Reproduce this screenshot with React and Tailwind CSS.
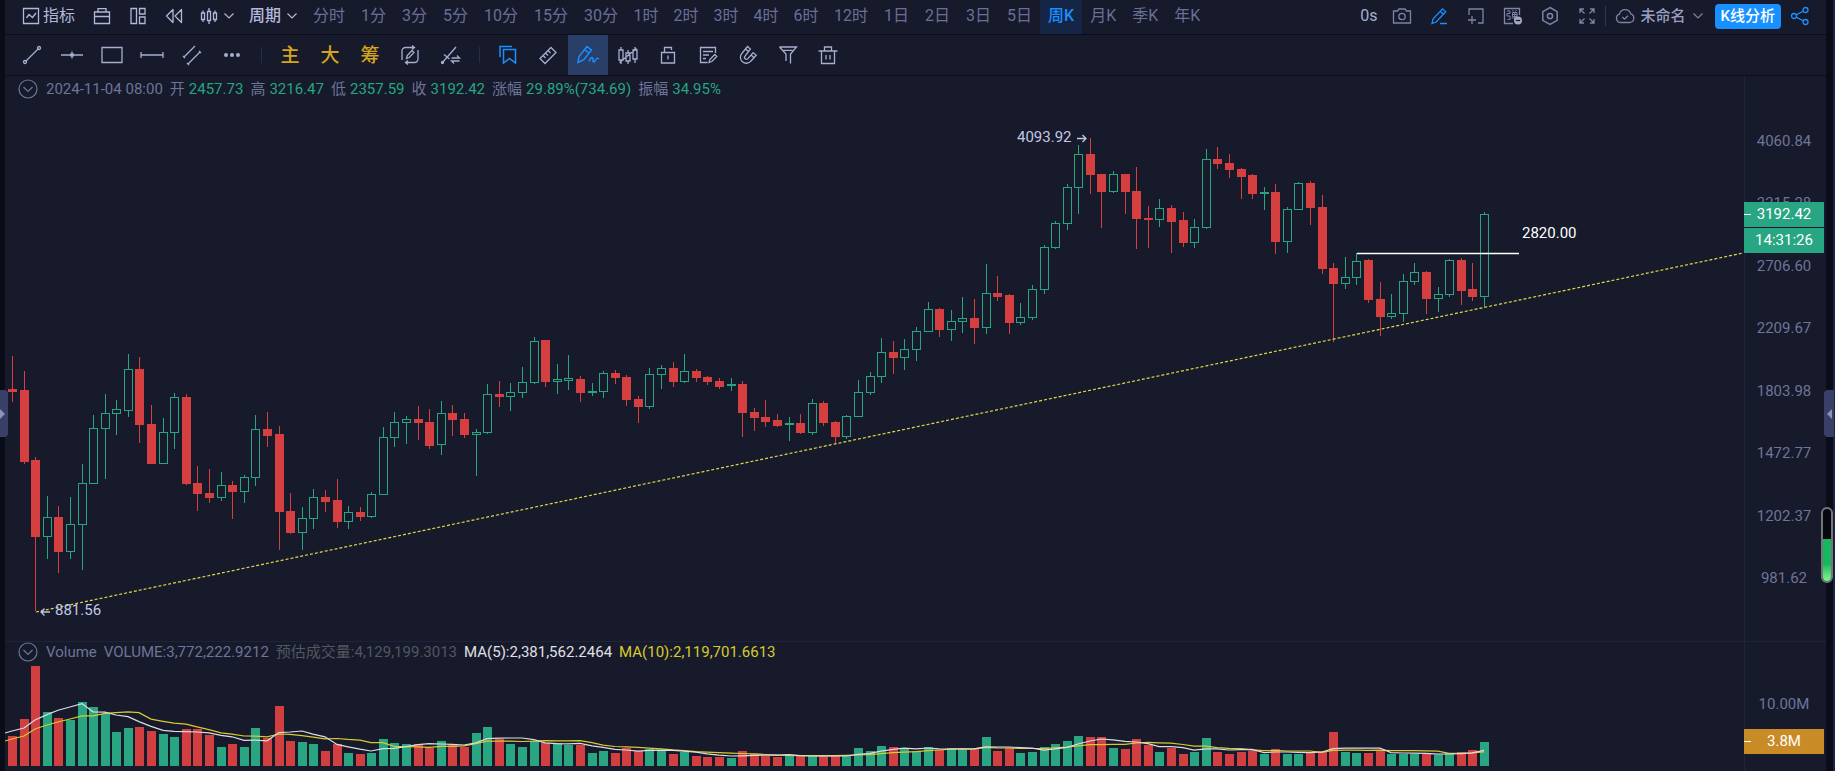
import { clsx } from "clsx";

const UP = "#26a581";
const DOWN = "#d63f40";

// Each candle: [direction, wick top, body top, body bottom, wick bottom, volume]
const CANDLES = [
    ["d", 356, 389, 392, 402, 30], ["d", 371, 390, 462, 464, 47], ["d", 457, 460, 537, 611, 100],
    ["u", 496, 517, 537, 559, 54], ["d", 506, 517, 552, 573, 48], ["u", 497, 524, 552, 559, 46],
    ["u", 464, 483, 525, 570, 64], ["u", 415, 428, 484, 484, 59], ["u", 394, 413, 429, 479, 52],
    ["u", 400, 409, 414, 435, 34], ["u", 354, 369, 411, 417, 38], ["d", 357, 369, 425, 443, 39],
    ["d", 405, 424, 464, 464, 35], ["u", 418, 432, 464, 464, 32], ["u", 393, 397, 433, 449, 29],
    ["d", 394, 397, 484, 485, 37], ["d", 466, 483, 494, 511, 37], ["d", 469, 493, 498, 503, 31],
    ["u", 472, 485, 498, 501, 19], ["d", 481, 485, 492, 519, 22], ["u", 475, 477, 492, 503, 19],
    ["u", 415, 429, 478, 486, 38], ["d", 412, 429, 436, 447, 28], ["d", 426, 434, 512, 550, 60],
    ["d", 493, 511, 533, 534, 25], ["u", 507, 518, 533, 550, 24], ["u", 489, 497, 519, 529, 22],
    ["d", 490, 497, 502, 512, 15], ["d", 479, 500, 522, 528, 22], ["u", 506, 512, 522, 529, 13],
    ["d", 507, 512, 517, 521, 12], ["u", 492, 494, 517, 518, 13], ["u", 427, 437, 495, 495, 27],
    ["u", 412, 422, 438, 447, 23], ["u", 416, 419, 423, 444, 22], ["d", 406, 419, 423, 440, 22],
    ["d", 409, 422, 446, 449, 18], ["u", 401, 413, 445, 455, 25], ["d", 405, 413, 420, 436, 21],
    ["d", 413, 419, 435, 438, 19], ["u", 429, 432, 435, 476, 33], ["u", 384, 394, 433, 434, 39],
    ["d", 381, 394, 397, 407, 27], ["u", 383, 392, 397, 411, 22], ["u", 367, 382, 393, 398, 19],
    ["u", 337, 341, 383, 384, 25], ["d", 340, 340, 382, 387, 23], ["u", 364, 379, 382, 394, 23],
    ["u", 355, 378, 381, 390, 21], ["d", 376, 379, 393, 402, 21], ["u", 383, 391, 393, 396, 13],
    ["u", 371, 373, 392, 398, 15], ["d", 370, 373, 378, 384, 13], ["d", 375, 377, 400, 406, 18],
    ["d", 396, 399, 407, 423, 15], ["u", 368, 374, 407, 409, 17], ["u", 365, 368, 375, 389, 16],
    ["d", 362, 368, 382, 387, 12], ["u", 354, 371, 382, 383, 14], ["d", 369, 371, 378, 382, 10],
    ["d", 376, 377, 382, 385, 9], ["d", 378, 381, 387, 389, 9], ["u", 378, 384, 386, 391, 8],
    ["d", 381, 384, 413, 437, 15], ["d", 408, 412, 418, 431, 12], ["d", 400, 417, 422, 427, 10],
    ["d", 414, 420, 426, 427, 9], ["u", 417, 423, 425, 441, 11], ["d", 414, 423, 433, 434, 10],
    ["u", 399, 403, 433, 435, 10], ["d", 401, 403, 423, 426, 9], ["d", 421, 422, 437, 444, 10],
    ["u", 415, 416, 437, 439, 11], ["u", 380, 392, 417, 417, 18], ["u", 372, 376, 393, 395, 15],
    ["u", 338, 352, 377, 383, 20], ["d", 341, 352, 358, 374, 19], ["u", 339, 349, 358, 370, 17],
    ["u", 327, 331, 350, 361, 15], ["u", 302, 309, 332, 332, 19], ["d", 308, 309, 330, 337, 16],
    ["u", 310, 321, 330, 341, 18], ["u", 297, 318, 322, 333, 16], ["d", 299, 318, 328, 344, 17],
    ["u", 264, 293, 328, 334, 29], ["d", 276, 293, 297, 301, 15], ["d", 294, 295, 323, 334, 18],
    ["u", 303, 317, 323, 325, 13], ["u", 285, 289, 318, 320, 14], ["u", 245, 247, 290, 294, 19],
    ["u", 221, 223, 248, 249, 22], ["u", 184, 187, 224, 230, 25], ["u", 145, 154, 188, 214, 30],
    ["d", 138, 154, 175, 194, 29], ["d", 174, 174, 192, 228, 29], ["u", 171, 174, 192, 193, 18],
    ["d", 174, 174, 192, 214, 17], ["d", 167, 191, 219, 249, 27], ["d", 206, 218, 220, 248, 21],
    ["u", 199, 208, 220, 227, 14], ["d", 205, 208, 222, 253, 18], ["d", 212, 220, 243, 247, 12],
    ["u", 219, 227, 243, 248, 14], ["u", 149, 159, 228, 229, 28], ["d", 147, 159, 164, 169, 14],
    ["d", 154, 163, 170, 178, 12], ["d", 168, 169, 177, 199, 14], ["d", 174, 175, 194, 199, 15],
    ["u", 187, 192, 194, 210, 12], ["d", 184, 192, 242, 254, 17], ["u", 207, 209, 242, 253, 12],
    ["u", 182, 183, 210, 210, 12], ["d", 181, 183, 208, 225, 14], ["d", 195, 207, 269, 274, 15],
    ["d", 263, 268, 284, 342, 34], ["u", 257, 277, 284, 289, 14], ["u", 253, 261, 278, 285, 13],
    ["d", 259, 260, 300, 303, 13], ["d", 282, 299, 317, 336, 15], ["u", 294, 313, 317, 319, 12],
    ["u", 274, 281, 314, 322, 12], ["u", 263, 272, 282, 285, 12], ["d", 271, 272, 299, 314, 12],
    ["u", 287, 294, 299, 312, 11], ["u", 259, 260, 295, 297, 13], ["d", 258, 260, 291, 305, 14],
    ["d", 263, 289, 297, 301, 16], ["u", 212, 214, 297, 307, 24],
];

// Volumes before the first visible candle, needed by the moving averages
const EARLIER_VOLUMES = [17, 30, 14, 18, 16, 32, 60, 27, 26];
const VOLUME_BASE = 766;

const candleX = (i) => Math.round(12 + i * 11.59);

function averageLine(period) {
    const all = [...EARLIER_VOLUMES, ...CANDLES.map((c) => c[5])];
    const points = CANDLES.map((_, i) => {
        const end = i + EARLIER_VOLUMES.length + 1;
        const sum = all.slice(end - period, end).reduce((a, b) => a + b, 0);
        return [candleX(i), VOLUME_BASE - sum / period];
    });
    return [[5, points[0][1] + 2], ...points].map((p) => p.join(",")).join(" ");
}

const PERIODS = [
    "分时", "1分", "3分", "5分", "10分", "15分", "30分", "1时", "2时", "3时", "4时", "6时",
    "12时", "1日", "2日", "3日", "5日", "周K", "月K", "季K", "年K",
];

const PRICES = ["4060.84", "3315.28", "2706.60", "2209.67", "1803.98", "1472.77", "1202.37", "981.62"];

function Icon({ children, size = 20, className }) {
    return (
        <svg
            width={size}
            height={size}
            viewBox="0 0 20 20"
            fill="none"
            stroke="currentColor"
            strokeWidth="1.3"
            className={clsx("shrink-0", className)}
            aria-hidden="true"
        >
            {children}
        </svg>
    );
}

function Chevron({ className }) {
    return (
        <svg width="10" height="6" viewBox="0 0 10 6" fill="none" stroke="currentColor" strokeWidth="1.2" className={className} aria-hidden="true">
            <path d="M0.5 0.5 5 5 9.5 0.5" />
        </svg>
    );
}

function IconButton({ label, className, children }) {
    return (
        <button type="button" aria-label={label} className={clsx("flex items-center justify-center shrink-0", className)}>
            {children}
        </button>
    );
}

function TopBar() {
    return (
        <header className="flex items-center h-[35px] border-b border-[#0b0e1a] text-base leading-6 whitespace-nowrap">
            <div className="flex items-center pl-4 pb-[2px] text-[#b3b7da]">
                <button type="button" className="flex items-center gap-[2px]">
                    <Icon>
                        <path d="M2.5 2.5h15v15h-15z" />
                        <path d="M5.5 12 8 8.5l3.5 3L15 7" />
                    </Icon>
                    指标
                </button>
                <IconButton label="模板" className="w-9 h-8 ml-[9px]">
                    <Icon>
                        <path d="M2.500 6h15v11.500h-15zM2.500 10.500h15M6 6V2.600h8V6" />
                    </Icon>
                </IconButton>
                <IconButton label="布局" className="w-9 h-8">
                    <Icon>
                        <path d="M3 2.500h5.500v15H3zM11.500 2.500H17V8h-5.500zM11.500 11H17v6.500h-5.500z" />
                    </Icon>
                </IconButton>
                <IconButton label="回放" className="w-9 h-8">
                    <Icon>
                        <path d="M9 3.500v13L2.500 10zM17.500 3.500v13L11 10z" strokeLinejoin="round" />
                    </Icon>
                </IconButton>
                <button type="button" aria-label="图表类型" className="flex items-center gap-[5px] ml-[7px]">
                    <Icon>
                        <path d="M2.500 7h3v6.500h-3zM8.500 5.500h3v9h-3zM14.500 7h3v6.500h-3zM4 4.500V7M4 13.500V16M10 2v3.500M10 14.500V18M16 4.500V7M16 13.500V16" />
                    </Icon>
                    <Chevron />
                </button>
                <button type="button" className="flex items-center gap-[6px] ml-[15px] font-medium">
                    周期
                    <Chevron />
                </button>
            </div>
            <nav className="flex items-center ml-2 text-[#6a6f98]">
                {PERIODS.map((p) => (
                    <button
                        key={p}
                        type="button"
                        className={clsx(
                            "h-[34px] pb-[5px] pt-[3px]",
                            /^\d时$/.test(p) ? "w-10" : "px-2",
                            p === "周K" && "bg-[#152545] text-[#1890ff] font-medium"
                        )}
                    >
                        {p}
                    </button>
                ))}
            </nav>
            <div className="flex items-center ml-auto pr-4 pb-[2px] text-[#7e83a8]">
                <span className="mr-[6px] text-[#a9adcf]">0s</span>
                <IconButton label="截图" className="w-[37px]">
                    <Icon>
                        <path d="M1.500 5h4l1.500-2h6l1.500 2h4v12h-17z" />
                        <circle cx="10" cy="10.500" r="3.200" />
                    </Icon>
                </IconButton>
                <IconButton label="画线" className="w-[37px] text-[#1890ff]">
                    <Icon>
                        <path d="M3 17.500 4 13 13.500 2.800l3.200 3L7.200 16zM11.200 5.300l3.200 3M11 17.500h7" />
                    </Icon>
                </IconButton>
                <IconButton label="新建窗口" className="w-[37px]">
                    <Icon>
                        <path d="M3 9V3h14v14h-5M2 14h8M6 10v8" />
                    </Icon>
                </IconButton>
                <IconButton label="弹窗" className="w-[37px]">
                    <Icon>
                        <path d="M16.500 9V2.500h-15v15H10" />
                        <path d="M4 5h3v2.500H4V10h3v3.500H4.500M9.500 4l1 1.500M13.500 4l-1 1.500M9.500 6.500h4.500v4H9.500zM9.500 8.500H14M8.500 12H14M11.700 6.500v8" strokeWidth="1" />
                        <circle cx="15" cy="14.500" r="4" fill="#a3a8c6" stroke="none" />
                        <path d="M12.800 14.500h4.400" stroke="#161a2b" />
                    </Icon>
                </IconButton>
                <IconButton label="设置" className="w-[37px]">
                    <Icon>
                        <path d="m10 1.500 7.200 4.200v8.600L10 18.500l-7.200-4.200V5.700z" strokeWidth="1.500" />
                        <circle cx="10" cy="10" r="2.600" strokeWidth="1.500" />
                    </Icon>
                </IconButton>
                <IconButton label="全屏" className="w-9">
                    <Icon>
                        <path d="M3 7V3h4M13 3h4v4M17 13v4h-4M7 17H3v-4M3 3l4.500 4.500M17 3l-4.500 4.500M17 17l-4.500-4.500M3 17l4.500-4.500" />
                    </Icon>
                </IconButton>
                <span className="w-px h-5 mr-2 bg-[#32375c]" />
                <button type="button" className="flex items-center gap-[5px]">
                    <Icon className="w-[22px]">
                        <path d="M5.500 16.500a4.300 4.300 0 0 1-1-8.400 5.800 5.800 0 0 1 11.200-.2 4.400 4.400 0 0 1-.8 8.600z" />
                        <path d="m7.300 11 2.200 2.200 3.500-3.500" />
                    </Icon>
                    <span className="text-[15px] font-medium text-[#9a9ec2]">未命名</span>
                    <Chevron className="ml-[2px]" />
                </button>
                <button type="button" className="h-[25px] px-[6px] ml-3 rounded-sm bg-[#1890ff] text-[15px] font-medium text-white">
                    K线分析
                </button>
                <IconButton label="分享" className="ml-[9px] text-[#1890ff]">
                    <Icon>
                        <circle cx="4" cy="10" r="2.500" />
                        <circle cx="15.500" cy="4" r="2.500" />
                        <circle cx="15.500" cy="16" r="2.500" />
                        <path d="m6.200 8.900 7-3.700M6.200 11.100l7 3.700" />
                    </Icon>
                </IconButton>
            </div>
        </header>
    );
}

const DRAW_TOOLS = [
    { label: "线段", draw: <><path d="m3.500 16.500 13-13" /><circle cx="3" cy="17" r="1.500" /><circle cx="17" cy="3" r="1.500" /></> },
    { label: "水平线", draw: <><path d="M-1 10h22M10 6.500v7" /><path d="M8 10h4" strokeWidth="3" /></> },
    { label: "矩形", draw: <path d="M0 2.500h20v15H0z" /> },
    { label: "水平线段", draw: <path d="M-1 10h22M-1 7v6M21 7v6" /> },
    { label: "平行线", draw: <path d="M2 12 13 1M6 19 18 7M1 11l2 2M5 18l2 2M17 6l2 2" /> },
    { label: "更多", draw: <g fill="currentColor" stroke="none"><circle cx="4" cy="10" r="2" /><circle cx="10" cy="10" r="2" /><circle cx="16" cy="10" r="2" /></g> },
];

const SIGNAL_TOOLS = [
    { label: "主", text: true },
    { label: "大", text: true },
    { label: "筹", text: true },
    { label: "循环画线", draw: <><path d="M2 15V6a3.500 3.500 0 0 1 3.500-3.500H14M12 .5l2.500 2L12 4.500M18 5v9a3.500 3.500 0 0 1-3.500 3.500H6M8 15.500l-2.500 2L8 19.500" /><path d="m6.500 13.500.8-3L12 5.500l2 2-4.800 5z" /></> },
    { label: "转换画线", draw: <><path d="m2 18 14-16M4 9.500l5.500 4.500" /><circle cx="2.500" cy="17.500" r="1" /><path d="M11.500 13h8l-2.500-2.500M19.500 16h-8l2.500 2.500" /></> },
];

const EDIT_TOOLS = [
    { label: "收藏", blue: true, draw: <><path d="M5.500 4.500h12v13.500l-6-4.500-6 4.500z" strokeWidth="1.500" /><path d="M2 12V1.500h12" strokeWidth="1.500" /></> },
    { label: "测量", draw: <path d="M2 13.500 13 2.500l5 5-11 11zM10 5.500l2.500 2.500M7.500 8l2.500 2.500M5 10.500 7.500 13" /> },
    { label: "画笔", blue: true, active: true, draw: <path d="M0 17.500 1 11.500 9 1.500l4.500 3.600L5.500 15zM6.500 4.500l4.500 3.600M11 16.500c2-5 4-5 4-1.500s1.500 2 2.500 0 2-2 3.500-1" strokeWidth="1.500" /> },
    { label: "隐藏K线", draw: <path d="M1 5h4v10H1zM8 8h4v8H8zM15 5h4v9h-4zM3 2v3M3 15v4M10 5v3M10 16v3M17 2v3M17 14v4M1.500 17.500l17-14" /> },
    { label: "锁定", draw: <path d="M3.500 7.500h13v10.500h-13zM6.500 7.500V2.500h7v2.500M10 10.500v4" /> },
    { label: "备注", draw: <path d="M17.500 8V2.500h-15v15h7M5 6.500h10M5 10h6M5 13.500h3M11 17.500l.8-3 5-5 2 2-5 5z" /> },
    { label: "磁铁", draw: <path d="M9.500 1.500 3.800 8.500a5.900 5.900 0 0 0 9 7.700l5.400-6-3-2.600-5.300 6a1.900 1.900 0 0 1-2.900-2.500L12.400 4zM7.500 4l2.900 2.500M13 10l2.900 2.600" /> },
    { label: "筛选", draw: <path d="M1.500 2h17L12.500 9v9.500M8 16V9L1.500 2M5.500 5.300h9" /> },
    { label: "删除", draw: <path d="M3.500 6h13v12.500h-13zM0.500 6h19M6.500 6V2h7v4M8 10v4.500M12 10v4.500" /> },
];

function ToolGroup({ tools }) {
    return tools.map((tool) => (
        <IconButton
            key={tool.label}
            label={tool.label}
            className={clsx("w-10 h-10", tool.active && "bg-[#2a3f68]", tool.blue && "text-[#1890ff]")}
        >
            {tool.text ? (
                <span className="pt-[2px] text-[19px] leading-6 font-medium text-[#d6a51c]">{tool.label}</span>
            ) : (
                <Icon className="overflow-visible">{tool.draw}</Icon>
            )}
        </IconButton>
    ));
}

function ToolDivider() {
    return (
        <div className="flex justify-center w-[18px]">
            <span className="w-px h-4 bg-[#22304d]" />
        </div>
    );
}

function ToolBar() {
    return (
        <div className="flex items-center h-[41px] pl-[7px] border-b border-[#0b0e1a] text-[#a9add0]">
            <ToolGroup tools={DRAW_TOOLS} />
            <ToolDivider />
            <ToolGroup tools={SIGNAL_TOOLS} />
            <ToolDivider />
            <ToolGroup tools={EDIT_TOOLS} />
        </div>
    );
}

function CollapseButton() {
    return (
        <IconButton label="收起" className="w-5 h-5 mr-[3px]">
            <Icon>
                <circle cx="10" cy="10" r="9" strokeWidth="1.200" />
                <path d="m5.500 8 4.500 4.500L14.500 8" strokeWidth="1.200" />
            </Icon>
        </IconButton>
    );
}

function Stat({ label, value }) {
    return (
        <span className="flex gap-1">
            {label}
            <span className="text-[#26a581]">{value}</span>
        </span>
    );
}

function PriceChart() {
    return (
        <svg viewBox="5 102 1739 539" preserveAspectRatio="xMinYMin meet" className="flex-1 min-h-0 w-full" role="img" aria-label="周K">
            <g shapeRendering="crispEdges">
                {CANDLES.map(([dir, high, top, bottom, low], i) => {
                    const x = candleX(i);
                    if (dir === "d") {
                        return (
                            <g key={i} fill={DOWN}>
                                <rect x={x} y={high} width="1" height={low - high} />
                                <rect x={x - 4} y={top} width="9" height={bottom - top} />
                            </g>
                        );
                    }
                    return (
                        <g key={i} fill={UP}>
                            <rect x={x} y={high} width="1" height={top - high} />
                            <rect x={x} y={bottom} width="1" height={low - bottom} />
                            <rect x={x - 3.5} y={top + 0.5} width="8" height={bottom - top - 1} fill="none" stroke={UP} />
                        </g>
                    );
                })}
            </g>
            <path d="M36 612 1743 253" stroke="#e0d84a" strokeWidth="1.200" strokeDasharray="3 2" />
            <path d="M1357 253.500h162" stroke="#ffffff" strokeWidth="1.500" />
            <g fontSize="15" fill="#c3c7e6">
                <text x="1017" y="142">4093.92</text>
                <text x="55" y="615">881.56</text>
                <path d="M1077 138.500h9M1082.500 135l3.500 3.500-3.500 3.500M50 612h-9M44.500 608.500 41 612l3.500 3.500" fill="none" stroke="#c3c7e6" strokeWidth="1.300" />
                <text x="1522" y="238" fill="#ffffff">2820.00</text>
            </g>
        </svg>
    );
}

function VolumeChart() {
    return (
        <svg viewBox="5 662 1739 109" preserveAspectRatio="xMinYMax meet" className="flex-1 min-h-0 w-full" role="img" aria-label="Volume">
            <g shapeRendering="crispEdges">
                {CANDLES.map((c, i) => (
                    <rect
                        key={i}
                        x={candleX(i) - 4}
                        y={VOLUME_BASE - c[5]}
                        width="9"
                        height={c[5]}
                        fill={c[0] === "u" ? "#29a582" : "#d13f41"}
                    />
                ))}
            </g>
            <polyline points={averageLine(10)} fill="none" stroke="#d8ca2e" strokeWidth="1.200" />
            <polyline points={averageLine(5)} fill="none" stroke="#dcdce0" strokeWidth="1.200" />
        </svg>
    );
}

function Tick() {
    return <span className="absolute left-0 top-3 w-[7px] h-px bg-white" />;
}

export default function App() {
    return (
        <div className="relative flex h-screen overflow-hidden bg-[#161a2b] font-['Roboto','Noto_Sans_CJK_SC',sans-serif] text-[15px] leading-5 text-[#6f7499]">
            <div className="w-[5px] shrink-0 bg-[#0a0d18]" />
            <main className="flex flex-col flex-1 min-w-0">
                <TopBar />
                <ToolBar />

                {/* Price panel */}
                <section className="flex flex-1 min-h-0">
                    <div className="flex flex-col flex-1 min-w-0">
                        <div className="flex items-center gap-[7px] h-[26px] pl-[13px] whitespace-nowrap">
                            <span className="flex items-center gap-[5px]">
                                <CollapseButton />
                                2024-11-04 08:00
                            </span>
                            <Stat label="开" value="2457.73" />
                            <Stat label="高" value="3216.47" />
                            <Stat label="低" value="2357.59" />
                            <Stat label="收" value="3192.42" />
                            <Stat label="涨幅" value="29.89%(734.69)" />
                            <Stat label="振幅" value="34.95%" />
                        </div>
                        <PriceChart />
                    </div>
                    <aside className="relative flex flex-col justify-between w-[82px] shrink-0 pt-[55px] pr-[3px] pb-[53px] border-l border-[#1f2438] text-center">
                        {PRICES.map((p) => (
                            <span key={p}>{p}</span>
                        ))}
                        <div className="absolute left-[-1px] top-[126px] w-20 text-white">
                            <div className="relative h-[25px] mb-px bg-[#28a582] leading-[25px]">
                                <Tick />
                                3192.42
                            </div>
                            <div className="h-[25px] bg-[#28a582] leading-[25px]">14:31:26</div>
                        </div>
                    </aside>
                </section>

                {/* Volume panel */}
                <section className="flex h-[130px] shrink-0 border-t border-[#1f2438]">
                    <div className="flex flex-col flex-1 min-w-0">
                        <div className="flex items-center gap-[7px] h-5 pl-[13px] whitespace-nowrap">
                            <span className="flex items-center gap-[5px]">
                                <CollapseButton />
                                Volume
                            </span>
                            <span>VOLUME:3,772,222.9212</span>
                            <span className="text-[#53575f]">预估成交量:4,129,199.3013</span>
                            <span className="text-[#e0e0e4]">MA(5):2,381,562.2464</span>
                            <span className="text-[#d8ca2e]">MA(10):2,119,701.6613</span>
                        </div>
                        <VolumeChart />
                    </div>
                    <aside className="relative w-[82px] shrink-0 pt-[52px] pr-[3px] border-l border-[#1f2438] text-center">
                        10.00M
                        <div className="absolute left-[-1px] top-[87px] w-20 h-[25px] bg-[#c98b26] leading-[25px] text-white">
                            <Tick />
                            3.8M
                        </div>
                    </aside>
                </section>
            </main>
            <div className="w-[9px] shrink-0 border-r-2 border-[#1a2440] bg-[#0a0d18]" />

            {/* Side panel handles and level meter */}
            <button type="button" aria-label="展开左侧" className="absolute left-0 top-[390px] flex items-center w-2 h-[47px] rounded-r-sm bg-[#3a3f68] text-[#8d93b8]">
                <svg width="5" height="10" viewBox="0 0 5 10" fill="currentColor"><path d="M0 0v10l5-5z" /></svg>
            </button>
            <button type="button" aria-label="展开右侧" className="absolute right-px top-[390px] flex items-center justify-center w-[10px] h-[47px] rounded-l-sm bg-[#3a3f68] text-[#8d93b8]">
                <svg width="5" height="10" viewBox="0 0 5 10" fill="currentColor"><path d="M5 0v10L0 5z" /></svg>
            </button>
            <div className="absolute right-[2px] top-[507px] flex flex-col justify-end w-3 h-[76px] rounded-md border-2 border-[#74767c] bg-[#06080f] overflow-hidden">
                <div className="h-[42px] bg-linear-to-b from-[#15b85c] from-60% to-[#7dfa8b]" />
            </div>
        </div>
    );
}
